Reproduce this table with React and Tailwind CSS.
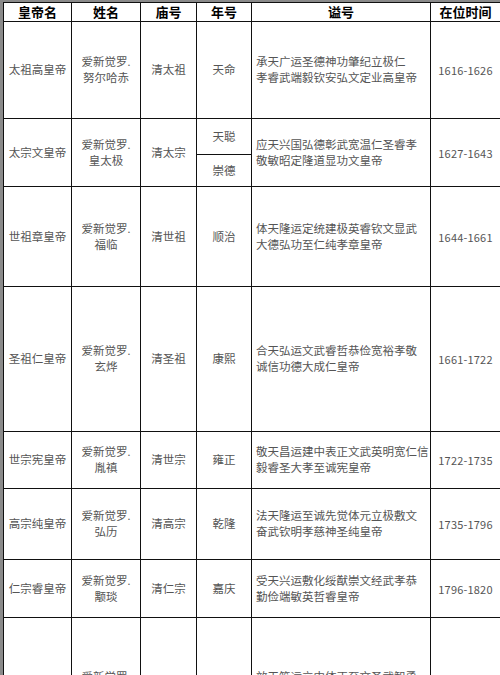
const rows = [
  {
    name: '太祖高皇帝',
    xing: ['爱新觉罗.', '努尔哈赤'],
    miao: '清太祖',
    nian: ['天命'],
    shi: ['承天广运圣德神功肇纪立极仁', '孝睿武端毅钦安弘文定业高皇帝'],
    years: '1616-1626',
    h: 97,
  },
  {
    name: '太宗文皇帝',
    xing: ['爱新觉罗.', '皇太极'],
    miao: '清太宗',
    nian: ['天聪', '崇德'],
    shi: ['应天兴国弘德彰武宽温仁圣睿孝', '敬敏昭定隆道显功文皇帝'],
    years: '1627-1643',
    h: 68,
  },
  {
    name: '世祖章皇帝',
    xing: ['爱新觉罗.', '福临'],
    miao: '清世祖',
    nian: ['顺治'],
    shi: ['体天隆运定统建极英睿钦文显武', '大德弘功至仁纯孝章皇帝'],
    years: '1644-1661',
    h: 100,
  },
  {
    name: '圣祖仁皇帝',
    xing: ['爱新觉罗.', '玄烨'],
    miao: '清圣祖',
    nian: ['康熙'],
    shi: ['合天弘运文武睿哲恭俭宽裕孝敬', '诚信功德大成仁皇帝'],
    years: '1661-1722',
    h: 145,
  },
  {
    name: '世宗宪皇帝',
    xing: ['爱新觉罗.', '胤禛'],
    miao: '清世宗',
    nian: ['雍正'],
    shi: ['敬天昌运建中表正文武英明宽仁信', '毅睿圣大孝至诚宪皇帝'],
    years: '1722-1735',
    h: 57,
  },
  {
    name: '高宗纯皇帝',
    xing: ['爱新觉罗.', '弘历'],
    miao: '清高宗',
    nian: ['乾隆'],
    shi: ['法天隆运至诚先觉体元立极敷文', '奋武钦明孝慈神圣纯皇帝'],
    years: '1735-1796',
    h: 71,
  },
  {
    name: '仁宗睿皇帝',
    xing: ['爱新觉罗.', '颙琰'],
    miao: '清仁宗',
    nian: ['嘉庆'],
    shi: ['受天兴运敷化绥猷崇文经武孝恭', '勤俭端敏英哲睿皇帝'],
    years: '1796-1820',
    h: 58,
  },
  {
    name: '宣宗成皇帝',
    xing: ['爱新觉罗.', '旻宁'],
    miao: '清宣宗',
    nian: ['道光'],
    shi: ['效天符运立中体正至文圣武智勇', '仁慈俭勤孝敏宽定成皇帝'],
    years: '1821-1850',
    h: 134,
  },
];

const serif = { fontFamily: '"Liberation Serif", "Noto Sans CJK SC", serif' };
const cell = 'border border-[#111] text-center align-middle p-0';

export default function App() {
  return (
    <div className="bg-white w-[500px] h-[675px] overflow-hidden">
      <div className="border-l-[3px] border-t-2 border-[#8a8a8a] w-[500px]">
        <table
          className="table-fixed border-collapse w-[497px] text-[11.5px] leading-[16px] text-[#555]"
          style={serif}
        >
          <colgroup>
            <col className="w-[68px]" />
            <col className="w-[69px]" />
            <col className="w-[56px]" />
            <col className="w-[55px]" />
            <col className="w-[179px]" />
            <col className="w-[70px]" />
          </colgroup>
          <thead>
            <tr
              className="h-[19px] text-black font-bold text-[13px] leading-[18px]"
              style={{ fontFamily: '"Noto Sans CJK SC", sans-serif' }}
            >
              <th className={cell}>皇帝名</th>
              <th className={cell}>姓名</th>
              <th className={cell}>庙号</th>
              <th className={cell}>年号</th>
              <th className={cell}>谥号</th>
              <th className={cell}>在位时间</th>
            </tr>
          </thead>
          <tbody>
            {rows.map((r) => {
              const split = r.nian.length === 2;
              const first = (
                <tr key={r.name} style={{ height: split ? 36 : r.h }}>
                  <td className={cell} rowSpan={split ? 2 : 1}>{r.name}</td>
                  <td className={cell} rowSpan={split ? 2 : 1}>
                    {r.xing[0]}
                    <br />
                    {r.xing[1]}
                  </td>
                  <td className={cell} rowSpan={split ? 2 : 1}>{r.miao}</td>
                  <td className={cell}>{r.nian[0]}</td>
                  <td
                    className={cell + ' text-left pl-[4px] whitespace-nowrap'}
                    rowSpan={split ? 2 : 1}
                  >
                    {r.shi[0]}
                    <br />
                    {r.shi[1]}
                  </td>
                  <td
                    className={cell + ' text-[11px] tracking-[0.2px]'}
                    rowSpan={split ? 2 : 1}
                    style={{ fontFamily: '"Noto Sans CJK SC", sans-serif' }}
                  >
                    {r.years}
                  </td>
                </tr>
              );
              if (!split) return first;
              return [
                first,
                <tr key={r.name + '-2'} style={{ height: r.h - 36 }}>
                  <td className={cell}>{r.nian[1]}</td>
                </tr>,
              ];
            })}
          </tbody>
        </table>
      </div>
    </div>
  );
}
